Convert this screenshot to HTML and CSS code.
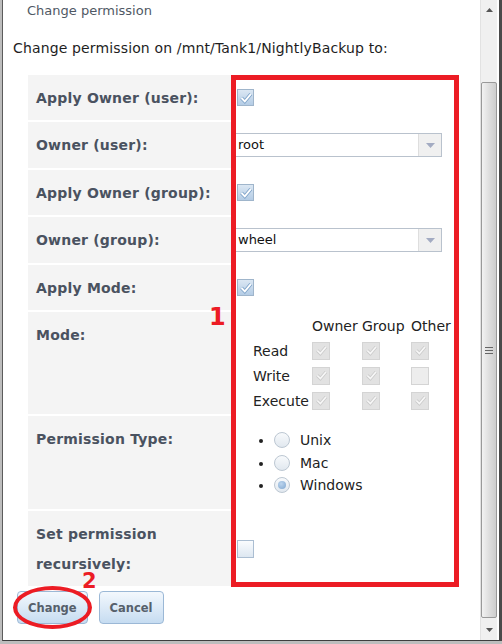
FILE: index.html
```html
<!DOCTYPE html>
<html>
<head>
<meta charset="utf-8">
<link rel="stylesheet" href="styles.css">
</head>
<body>
<div class="dialog">
  <div class="main">
    <div class="title">Change permission</div>
    <p class="intro">Change permission on /mnt/Tank1/NightlyBackup to:</p>
    <div class="form">
      <div class="grid">
        <div class="lbl">Apply Owner (user):</div>
        <div class="val"><span class="cb on"><svg width="14" height="14" viewBox="0 0 14 14"><path d="M2.5 7 L5.8 10.3 L11.8 3.2" stroke="#7ea3c9" stroke-width="3.6" fill="none"/><path d="M2.5 7 L5.8 10.3 L11.8 3.2" stroke="#fff" stroke-width="1.8" fill="none"/></svg></span></div>

        <div class="lbl">Owner (user):</div>
        <div class="val"><div class="sel"><span class="sel-text">root</span><span class="sel-arrow"><svg width="9" height="5" viewBox="0 0 9 5"><path d="M0 0 H9 L4.5 5 Z" fill="#a3abc2"/></svg></span></div></div>

        <div class="lbl">Apply Owner (group):</div>
        <div class="val"><span class="cb on"><svg width="14" height="14" viewBox="0 0 14 14"><path d="M2.5 7 L5.8 10.3 L11.8 3.2" stroke="#7ea3c9" stroke-width="3.6" fill="none"/><path d="M2.5 7 L5.8 10.3 L11.8 3.2" stroke="#fff" stroke-width="1.8" fill="none"/></svg></span></div>

        <div class="lbl">Owner (group):</div>
        <div class="val"><div class="sel"><span class="sel-text">wheel</span><span class="sel-arrow"><svg width="9" height="5" viewBox="0 0 9 5"><path d="M0 0 H9 L4.5 5 Z" fill="#a3abc2"/></svg></span></div></div>

        <div class="lbl">Apply Mode:</div>
        <div class="val"><span class="cb on"><svg width="14" height="14" viewBox="0 0 14 14"><path d="M2.5 7 L5.8 10.3 L11.8 3.2" stroke="#7ea3c9" stroke-width="3.6" fill="none"/><path d="M2.5 7 L5.8 10.3 L11.8 3.2" stroke="#fff" stroke-width="1.8" fill="none"/></svg></span></div>

        <div class="lbl">Mode:</div>
        <div class="val top mode">
          <div class="perm-grid">
            <span></span><span>Owner</span><span>Group</span><span>Other</span>
            <span>Read</span>
            <span class="cbd"><svg width="13" height="13" viewBox="0 0 14 14"><path d="M2.5 7 L5.8 10.3 L11.8 3.2" stroke="#cbcbcb" stroke-width="3.6" fill="none"/><path d="M2.5 7 L5.8 10.3 L11.8 3.2" stroke="#f7f7f7" stroke-width="1.8" fill="none"/></svg></span>
            <span class="cbd"><svg width="13" height="13" viewBox="0 0 14 14"><path d="M2.5 7 L5.8 10.3 L11.8 3.2" stroke="#cbcbcb" stroke-width="3.6" fill="none"/><path d="M2.5 7 L5.8 10.3 L11.8 3.2" stroke="#f7f7f7" stroke-width="1.8" fill="none"/></svg></span>
            <span class="cbd"><svg width="13" height="13" viewBox="0 0 14 14"><path d="M2.5 7 L5.8 10.3 L11.8 3.2" stroke="#cbcbcb" stroke-width="3.6" fill="none"/><path d="M2.5 7 L5.8 10.3 L11.8 3.2" stroke="#f7f7f7" stroke-width="1.8" fill="none"/></svg></span>
            <span>Write</span>
            <span class="cbd"><svg width="13" height="13" viewBox="0 0 14 14"><path d="M2.5 7 L5.8 10.3 L11.8 3.2" stroke="#cbcbcb" stroke-width="3.6" fill="none"/><path d="M2.5 7 L5.8 10.3 L11.8 3.2" stroke="#f7f7f7" stroke-width="1.8" fill="none"/></svg></span>
            <span class="cbd"><svg width="13" height="13" viewBox="0 0 14 14"><path d="M2.5 7 L5.8 10.3 L11.8 3.2" stroke="#cbcbcb" stroke-width="3.6" fill="none"/><path d="M2.5 7 L5.8 10.3 L11.8 3.2" stroke="#f7f7f7" stroke-width="1.8" fill="none"/></svg></span>
            <span class="cbd off"></span>
            <span>Execute</span>
            <span class="cbd"><svg width="13" height="13" viewBox="0 0 14 14"><path d="M2.5 7 L5.8 10.3 L11.8 3.2" stroke="#cbcbcb" stroke-width="3.6" fill="none"/><path d="M2.5 7 L5.8 10.3 L11.8 3.2" stroke="#f7f7f7" stroke-width="1.8" fill="none"/></svg></span>
            <span class="cbd"><svg width="13" height="13" viewBox="0 0 14 14"><path d="M2.5 7 L5.8 10.3 L11.8 3.2" stroke="#cbcbcb" stroke-width="3.6" fill="none"/><path d="M2.5 7 L5.8 10.3 L11.8 3.2" stroke="#f7f7f7" stroke-width="1.8" fill="none"/></svg></span>
            <span class="cbd"><svg width="13" height="13" viewBox="0 0 14 14"><path d="M2.5 7 L5.8 10.3 L11.8 3.2" stroke="#cbcbcb" stroke-width="3.6" fill="none"/><path d="M2.5 7 L5.8 10.3 L11.8 3.2" stroke="#f7f7f7" stroke-width="1.8" fill="none"/></svg></span>
          </div>
        </div>

        <div class="lbl">Permission Type:</div>
        <div class="val top perm">
          <ul class="radios">
            <li><span class="radio"></span>Unix</li>
            <li><span class="radio"></span>Mac</li>
            <li><span class="radio sel-r"></span>Windows</li>
          </ul>
        </div>

        <div class="lbl">Set permission recursively:</div>
        <div class="val"><span class="cb off"></span></div>
      </div>
      <div class="annot-box"></div>
      <div class="annot-num one">1</div>
    </div>
    <div class="actions">
      <button class="btn">Change</button>
      <button class="btn">Cancel</button>
      <div class="annot-ring"></div>
      <div class="annot-num two">2</div>
    </div>
  </div>
  <div class="scrollbar">
    <div class="sb-btn"><svg width="7" height="4" viewBox="0 0 7 4"><path d="M0 4 H7 L3.5 0 Z" fill="#555"/></svg></div>
    <div class="sb-track">
      <div class="sb-thumb"><span class="grip"></span></div>
    </div>
    <div class="sb-btn"><svg width="7" height="4" viewBox="0 0 7 4"><path d="M0 0 H7 L3.5 4 Z" fill="#555"/></svg></div>
  </div>
</div>
</body>
</html>
```

FILE: styles.css
```css
html, body {
  margin: 0;
  padding: 0;
}
body {
  background: #bdbdbd;
  height: 644px;
  overflow: hidden;
  font-family: "DejaVu Sans", Verdana, sans-serif;
}
.dialog {
  margin-left: 2px;
  width: 496px;
  height: 640px;
  display: flex;
  background: #fff;
  border-left: 1px solid #5c5c5c;
  border-right: 3px solid #4a4a4a;
  border-bottom: 1px solid #3e3e3e;
}
.main {
  width: 477px;
  flex: none;
}
.title {
  height: 22px;
  line-height: 22px;
  padding-left: 24px;
  font-size: 13px;
  color: #4f5864;
}
.intro {
  margin: 16px 0 0 10px;
  font-size: 14px;
  line-height: 20px;
  letter-spacing: 0.14px;
  color: #1e1e1e;
}
.form {
  position: relative;
  margin: 17px 0 0 25px;
  width: 432px;
}
.grid {
  display: grid;
  grid-template-columns: 203px 1fr;
  grid-template-rows: 45px 46px 45px 46px 45px 102px 93px 75px;
  gap: 2px;
}
.lbl {
  background: #f4f4f4;
  padding: 8px 8px;
  line-height: 30px;
  font-size: 14px;
  font-weight: bold;
  letter-spacing: 0.2px;
  color: #4a5260;
}
.val {
  display: flex;
  align-items: center;
  padding-left: 4px;
}
.val.top {
  align-items: flex-start;
}
.val.mode {
  padding-top: 2px;
}
.val.perm {
  padding-top: 13px;
}
.cb {
  width: 17px;
  height: 17px;
  box-sizing: border-box;
  border: 1px solid #9fb5cb;
  background: linear-gradient(#dbe7f3, #b4cce5);
  display: flex;
  align-items: center;
  justify-content: center;
}
.cb.off {
  height: 18px;
  border-color: #abbed2;
  background: linear-gradient(#fafcfe, #dde7f1);
}
.sel {
  margin-left: -3px;
  width: 208px;
  height: 24px;
  box-sizing: border-box;
  border: 1px solid #b9c2cd;
  display: flex;
  background: #fff;
}
.sel-text {
  flex: 1;
  padding-left: 3px;
  font-size: 13px;
  line-height: 22px;
  color: #111;
}
.sel-arrow {
  width: 22px;
  background: #f0f0f0;
  border-left: 1px solid #dedede;
  display: flex;
  align-items: center;
  justify-content: center;
}
.perm-grid {
  margin-left: 16px;
  display: grid;
  grid-template-columns: 59px 50px 49px auto;
  grid-template-rows: 24px 25px 25px 25px;
  align-items: center;
  font-size: 14px;
  color: #222;
}
.cbd {
  width: 18px;
  height: 18px;
  box-sizing: border-box;
  border: 1px solid #d4d4d4;
  background: #e2e2e2;
  display: flex;
  align-items: center;
  justify-content: center;
}
.cbd.off {
  background: #ededed;
}
.radios {
  margin: 0;
  padding-left: 37px;
  font-size: 14px;
  color: #222;
}
.radios li {
  line-height: 22.5px;
}
.radio {
  display: inline-block;
  vertical-align: -3px;
  width: 16px;
  height: 16px;
  box-sizing: border-box;
  border-radius: 50%;
  border: 1px solid #bcc7d2;
  background: linear-gradient(#f8fafc, #e1e8ef);
  margin-right: 10px;
  position: relative;
}
.radio.sel-r::after {
  content: "";
  position: absolute;
  left: 3px;
  top: 3px;
  width: 8px;
  height: 8px;
  border-radius: 50%;
  background: radial-gradient(circle at 40% 35%, #bcd5ee, #7fa6cf);
}
.annot-box {
  position: absolute;
  left: 203px;
  top: 0;
  width: 228px;
  height: 512px;
  box-sizing: border-box;
  border: 5px solid #ec1c24;
}
.annot-num {
  position: absolute;
  font-family: "DejaVu Sans", sans-serif;
  font-weight: bold;
  color: #ec1c24;
}
.annot-num.one {
  left: 181px;
  top: 228px;
  font-size: 24px;
  line-height: 28px;
}
.annot-num.two {
  left: 79px;
  top: -13px;
  font-size: 21px;
  line-height: 16px;
}
.actions {
  position: relative;
  padding: 5px 0 0 14px;
  display: flex;
  gap: 11px;
}
.btn {
  height: 33px;
  padding: 0 10px;
  border: 1px solid #9bb8d6;
  border-radius: 4px;
  background: linear-gradient(#f3f8fd, #c6dcf1);
  font-family: "DejaVu Sans", Verdana, sans-serif;
  font-weight: bold;
  font-size: 11.5px;
  color: #56606b;
}
.annot-ring {
  position: absolute;
  left: 10px;
  top: 0;
  width: 79px;
  height: 43px;
  box-sizing: border-box;
  border: 4px solid #ec1c24;
  border-radius: 50%;
}
.scrollbar {
  width: 17px;
  margin-right: 2px;
  display: flex;
  flex-direction: column;
  background: #f0f0f0;
  border-left: 1px solid #e2e2e2;
  box-sizing: border-box;
}
.sb-btn {
  height: 20px;
  display: flex;
  align-items: center;
  justify-content: center;
}
.sb-track {
  flex: 1;
  display: flex;
  flex-direction: column;
}
.sb-thumb {
  margin-top: 62px;
  height: 536px;
  box-sizing: border-box;
  border: 1px solid #999;
  border-radius: 2px;
  background: linear-gradient(to right, #f2f2f2, #dedede 50%, #cdcdcd);
  display: flex;
  align-items: center;
  justify-content: center;
}
.grip {
  width: 8px;
  height: 5px;
  border-top: 1px solid #666;
  border-bottom: 1px solid #666;
  position: relative;
}
.grip::after {
  content: "";
  position: absolute;
  left: 0;
  right: 0;
  top: 2px;
  border-top: 1px solid #666;
}
```
